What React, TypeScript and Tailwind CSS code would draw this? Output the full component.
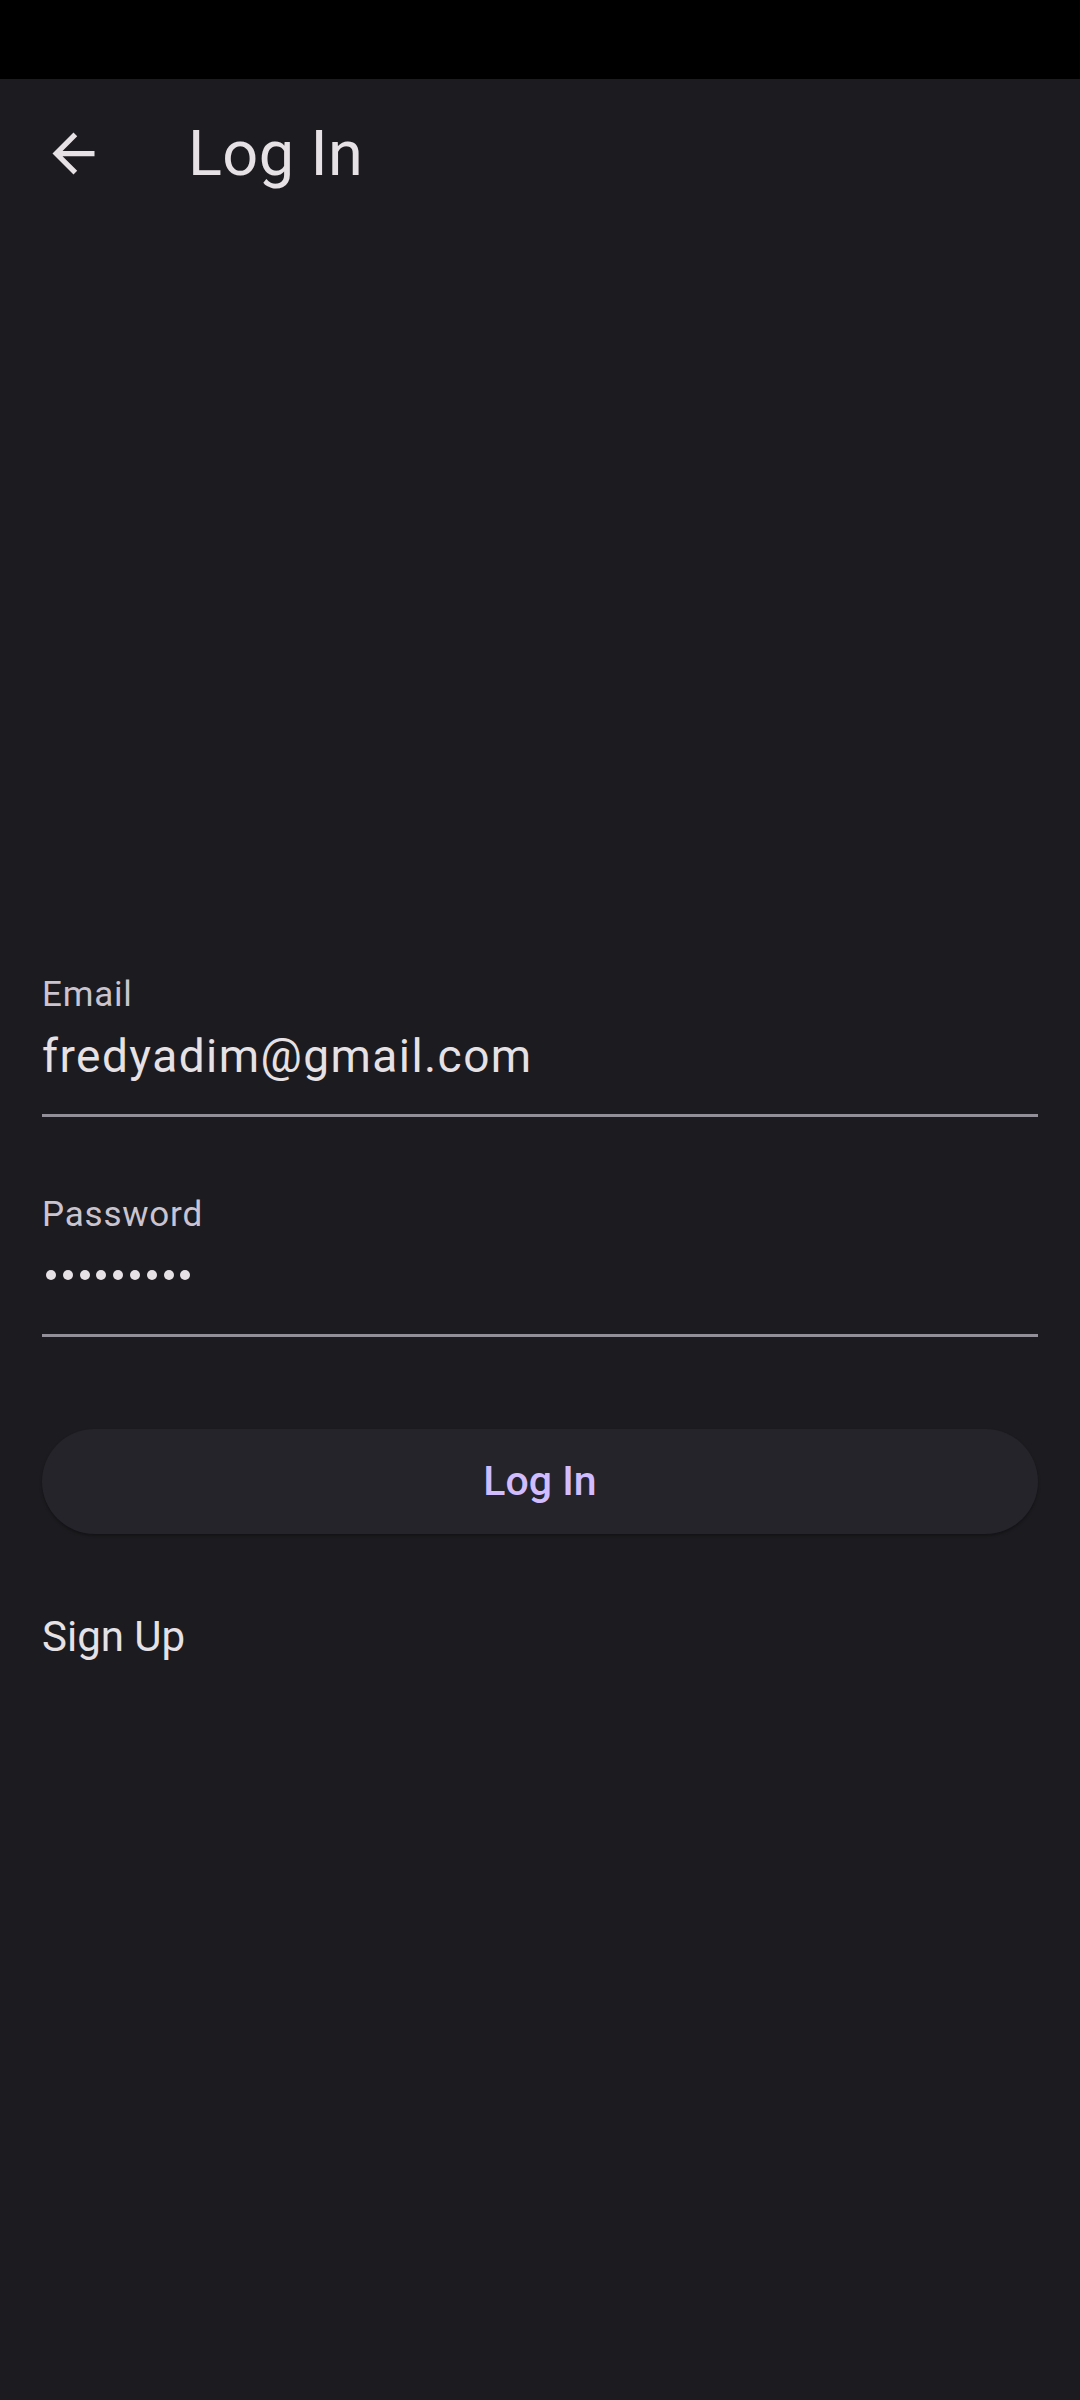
import React from "react";

const BackArrow = () => (
  <svg width="63" height="63" viewBox="0 0 24 24" fill="#e6e1e5">
    <path d="M20 11H7.83l5.59-5.59L12 4l-8 8 8 8 1.41-1.41L7.83 13H20v-2z" />
  </svg>
);

const Field = ({ label, children }: { label: string; children: React.ReactNode }) => (
  <div className="flex flex-col">
    <div className="text-[35px] leading-[35px] tracking-[0.8px] text-[#cac4d0]">{label}</div>
    <div className="mt-[21px] h-[46px] flex items-center">{children}</div>
    <div className="mt-[35px] h-[3px] bg-[#938f99]" />
  </div>
);

export default function App() {
  const dots = Array.from({ length: 9 });

  return (
    <div className="w-[1080px] h-[2400px] bg-[#1c1b1f] font-[Roboto,sans-serif] text-[#e6e1e5] flex flex-col">
      <div className="h-[79px] bg-black" />

      <header className="h-[148px] flex items-center pl-[42px]">
        <BackArrow />
        <h1 className="ml-[83px] text-[63px] leading-[63px] tracking-[0.4px] font-normal">Log In</h1>
      </header>

      <main className="px-[42px] pt-[750px] flex flex-col">
        <Field label="Email">
          <span className="text-[46px] leading-[46px] tracking-[1.45px]">fredyadim@gmail.com</span>
        </Field>

        <div className="mt-[80px]">
          <Field label="Password">
            <div className="flex gap-[6.8px] pl-[4px] -mt-[3px]">
              {dots.map((_, i) => (
                <span key={i} className="w-[10px] h-[10px] rounded-full bg-[#e6e1e5]" />
              ))}
            </div>
          </Field>
        </div>

        <button className="mt-[92px] h-[105px] w-full rounded-full bg-[#25242a] shadow-[0_2px_3px_rgba(0,0,0,0.3)] text-[41px] leading-[41px] font-medium text-[#d0bcff]">
          Log In
        </button>

        <div className="mt-[82px] text-[42px] leading-[42px]">Sign Up</div>
      </main>
    </div>
  );
}
